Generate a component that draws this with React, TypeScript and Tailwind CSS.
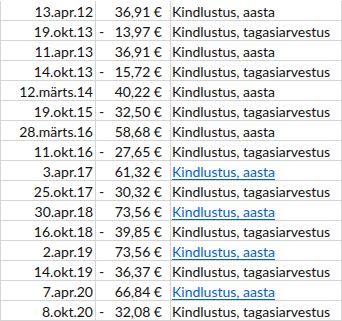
import React from "react";

const rows: [string, boolean, string, string, boolean][] = [
  ["13.apr.12", false, "36,91 €", "Kindlustus, aasta", false],
  ["19.okt.13", true, "13,97 €", "Kindlustus, tagasiarvestus", false],
  ["11.apr.13", false, "36,91 €", "Kindlustus, aasta", false],
  ["14.okt.13", true, "15,72 €", "Kindlustus, tagasiarvestus", false],
  ["12.märts.14", false, "40,22 €", "Kindlustus, aasta", false],
  ["19.okt.15", true, "32,50 €", "Kindlustus, tagasiarvestus", false],
  ["28.märts.16", false, "58,68 €", "Kindlustus, aasta", false],
  ["11.okt.16", true, "27,65 €", "Kindlustus, tagasiarvestus", false],
  ["3.apr.17", false, "61,32 €", "Kindlustus, aasta", true],
  ["25.okt.17", true, "30,32 €", "Kindlustus, tagasiarvestus", false],
  ["30.apr.18", false, "73,56 €", "Kindlustus, aasta", true],
  ["16.okt.18", true, "39,85 €", "Kindlustus, tagasiarvestus", false],
  ["2.apr.19", false, "73,56 €", "Kindlustus, aasta", true],
  ["14.okt.19", true, "36,37 €", "Kindlustus, tagasiarvestus", false],
  ["7.apr.20", false, "66,84 €", "Kindlustus, aasta", true],
  ["8.okt.20", true, "32,08 €", "Kindlustus, tagasiarvestus", false],
];

export default function App() {
  return (
    <div className="w-[342px] h-[321px] bg-white overflow-hidden pt-px">
      <div
        className="grid grid-cols-[95px_75px_171px] border-l border-[#d4d4d4] text-[14px] leading-[21px] text-[#111]"
        style={{ fontFamily: "Lato, 'Noto Sans', sans-serif" }}
      >
        {rows.map(([date, neg, amt, text, link], i) => (
          <React.Fragment key={i}>
            <div className="h-5 border-r border-b border-[#d4d4d4] text-right pr-[2px] whitespace-nowrap">{date}</div>
            <div className="h-5 border-r border-b border-[#d4d4d4] flex justify-between pl-[3px] pr-[8px] whitespace-nowrap">
              <span>{neg ? "-" : ""}</span>
              <span>{amt}</span>
            </div>
            <div className="h-5 border-r border-b border-[#d4d4d4] pl-[1px] whitespace-nowrap">
              {link ? (
                <span className="text-[#0563c1] underline underline-offset-2">{text}</span>
              ) : (
                text
              )}
            </div>
          </React.Fragment>
        ))}
      </div>
    </div>
  );
}
